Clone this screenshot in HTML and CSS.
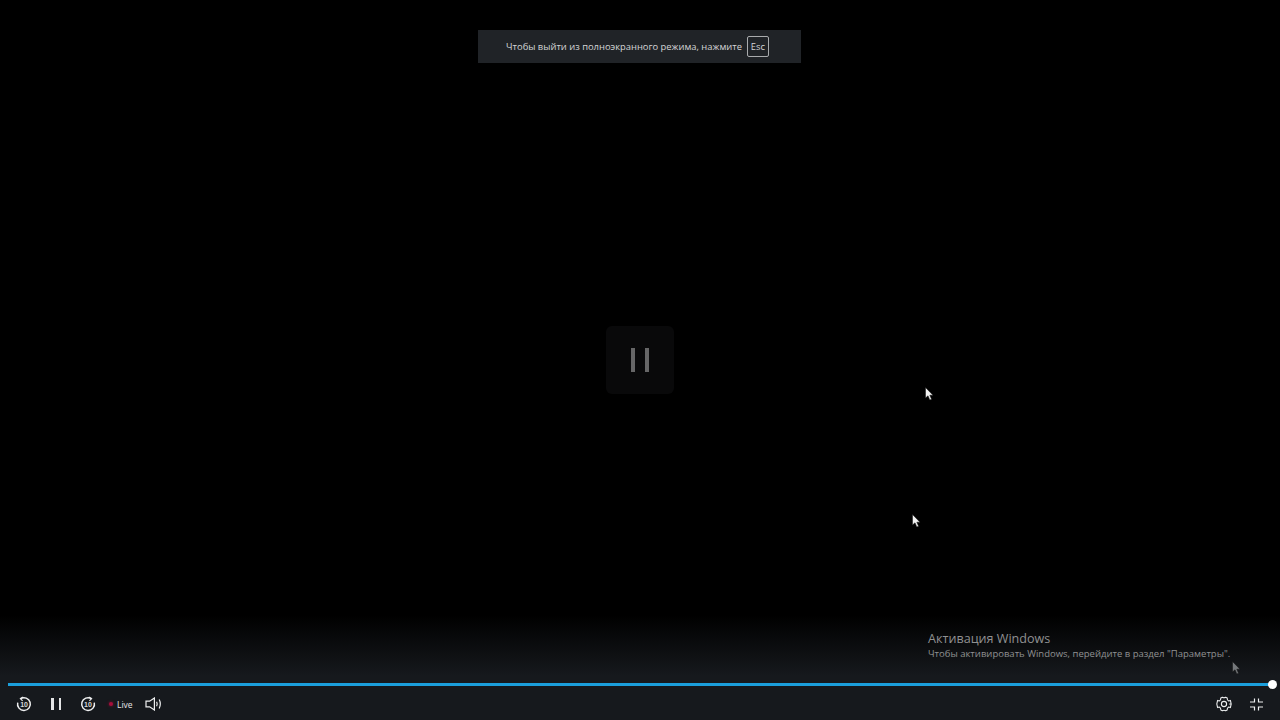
FILE: index.html
```html
<!DOCTYPE html>
<html lang="ru">
<head>
	<meta charset="UTF-8">
	<title>Live</title>
	<link rel="stylesheet" href="styles.css">
</head>
<body>
<div class="player">
	<div class="toast">
		<span class="toast-text">Чтобы выйти из полноэкранного режима, нажмите</span>
		<span class="esc">Esc</span>
	</div>

	<div class="center-pause">
		<span class="center-bar"></span>
		<span class="center-bar"></span>
	</div>

	<svg class="cursor cursor-a" viewBox="0 0 9 14"><path d="M0.5 0.5V11L3 8.8L4.8 13L6.6 12.2L4.8 8.2H8Z"/></svg>
	<svg class="cursor cursor-b" viewBox="0 0 9 14"><path d="M0.5 0.5V11L3 8.8L4.8 13L6.6 12.2L4.8 8.2H8Z"/></svg>

	<div class="controls">
		<div class="progress"><span class="thumb"></span></div>
		<div class="control-row">
			<div class="control-group">
				<button class="btn">
					<svg viewBox="0 0 16 16"><path d="M4.6 2.6A6.4 6.4 0 1 1 1.7 6.6"/><path class="tip" d="M7.2 1L4.4 2.6L6.6 4.8"/><text x="8.1" y="10.6">10</text></svg>
				</button>
				<button class="btn">
					<span class="pause-bar"></span>
					<span class="pause-bar"></span>
				</button>
				<button class="btn">
					<svg viewBox="0 0 16 16"><path d="M11.4 2.6A6.4 6.4 0 1 0 14.3 6.6"/><path class="tip" d="M8.8 1L11.6 2.6L9.4 4.8"/><text x="7.9" y="10.6">10</text></svg>
				</button>
				<div class="live"><span class="live-dot"></span>Live</div>
				<button class="btn btn-sound">
					<svg viewBox="0 0 18 14"><path d="M1 4.2H4.6L9.4 1V13L4.6 9.8H1Z"/><path d="M11.6 4.8Q12.8 7 11.6 9.2"/><path d="M14.2 2.6Q16.4 7 14.2 11.4"/></svg>
				</button>
			</div>
			<div class="control-group">
				<button class="btn btn-gear">
					<svg viewBox="0 0 16 16"><path d="M6.4 1.2Q8 2.4 9.6 1.2L11.2 2.1Q11 4.1 12.7 5L14.4 4.4L15.2 8Q13.6 8 13.6 8Q13.6 8 15.2 8L14.4 11.6L12.7 11Q11 11.9 11.2 13.9L9.6 14.8Q8 13.6 6.4 14.8L4.8 13.9Q5 11.9 3.3 11L1.6 11.6L0.8 8L1.6 4.4L3.3 5Q5 4.1 4.8 2.1Z"/><circle cx="8" cy="8" r="2.6"/></svg>
				</button>
				<button class="btn btn-full">
					<svg viewBox="0 0 15 13"><path d="M5.5 0.5V4H1"/><path d="M9.5 0.5V4H14"/><path d="M5.5 12.5V9H1"/><path d="M9.5 12.5V9H14"/></svg>
				</button>
			</div>
		</div>
	</div>

	<div class="watermark">
		<div class="watermark-title">Активация Windows</div>
		<div class="watermark-text">Чтобы активировать Windows, перейдите в раздел "Параметры".</div>
	</div>

	<svg class="cursor cursor-c" viewBox="0 0 9 14"><path d="M0.5 0.5V11L3 8.8L4.8 13L6.6 12.2L4.8 8.2H8Z"/></svg>
</div>
</body>
</html>
```

FILE: styles.css
```css
* {
	margin: 0;
	padding: 0;
	box-sizing: border-box;
}

body {
	background: #000;
	font-family: "Open Sans", "Noto Sans", sans-serif;
	overflow: hidden;
}

.player {
	position: relative;
	width: 1280px;
	height: 720px;
	background: #000;
	display: flex;
	flex-direction: column;
	justify-content: flex-end;
}

/* fullscreen hint */
.toast {
	position: absolute;
	top: 30px;
	left: 478px;
	width: 323px;
	height: 33px;
	padding-right: 4px;
	display: flex;
	align-items: center;
	justify-content: center;
	gap: 5px;
	background: #202327;
	color: #d4d5d6;
	font-size: 9.4px;
}

.esc {
	width: 22px;
	height: 21px;
	display: flex;
	align-items: center;
	justify-content: center;
	border: 1px solid #a9abad;
	border-radius: 2px;
	font-size: 9.4px;
}

.center-pause {
	position: absolute;
	top: 326px;
	left: 606px;
	width: 68px;
	height: 68px;
	display: flex;
	align-items: center;
	justify-content: center;
	gap: 10px;
	background: #09090a;
	border-radius: 6px;
}

.center-bar {
	width: 4px;
	height: 24px;
	background: #666667;
}

.cursor {
	position: absolute;
	width: 9px;
	height: 14px;
}

.cursor path {
	fill: #f2f2f2;
	stroke: #111;
	stroke-width: 0.5;
}

.cursor-a {
	top: 387px;
	left: 925px;
}

.cursor-b {
	top: 514px;
	left: 912px;
}

.cursor-c {
	top: 661px;
	left: 1232px;
}

.cursor-c path {
	fill: #75787b;
}

/* bottom bar */
.controls {
	height: 105px;
	padding: 0 8px;
	display: flex;
	flex-direction: column;
	justify-content: flex-end;
	background: linear-gradient(to bottom, rgba(22, 25, 29, 0), #16191d 58%);
}

.progress {
	position: relative;
	height: 3px;
	margin-bottom: 2px;
	background: #1b9fdc;
}

.thumb {
	position: absolute;
	top: -3px;
	right: -5px;
	width: 9px;
	height: 9px;
	border-radius: 50%;
	background: #fff;
}

.control-row {
	height: 32px;
	display: flex;
	align-items: center;
	justify-content: space-between;
}

.control-group {
	display: flex;
	align-items: center;
}

.btn {
	width: 32px;
	height: 32px;
	display: flex;
	align-items: center;
	justify-content: center;
	gap: 5px;
	background: none;
	border: 0;
}

.btn svg {
	width: 16px;
	height: 16px;
	fill: none;
	stroke: #eeeff0;
	stroke-width: 1.5;
}

.btn text {
	fill: #d8d9da;
	stroke: none;
	font-size: 7px;
	font-weight: 700;
	text-anchor: middle;
}

.btn .tip {
	stroke-width: 1.1;
}

.pause-bar {
	width: 2.5px;
	height: 12px;
	background: #e4e5e6;
}

.btn-sound svg {
	width: 18px;
	height: 14px;
	stroke-width: 1.2;
}

.btn-gear svg {
	stroke-width: 1.1;
	stroke-linejoin: round;
}

.btn-full svg {
	width: 15px;
	height: 13px;
	stroke-width: 1.2;
}

.live {
	width: 34px;
	padding-left: 5px;
	display: flex;
	align-items: center;
	gap: 4px;
	color: #e4e5e6;
	font-size: 8.5px;
	white-space: nowrap;
}

.live-dot {
	flex: none;
	width: 4px;
	height: 4px;
	border-radius: 50%;
	background: #a50f3b;
	box-shadow: 0 0 3px #8a0d32;
}

/* os watermark */
.watermark {
	position: absolute;
	top: 630px;
	left: 928px;
	color: #909192;
}

.watermark-title {
	font-size: 12.6px;
	line-height: 17px;
}

.watermark-text {
	font-size: 9.5px;
	line-height: 13px;
	white-space: nowrap;
}
```
